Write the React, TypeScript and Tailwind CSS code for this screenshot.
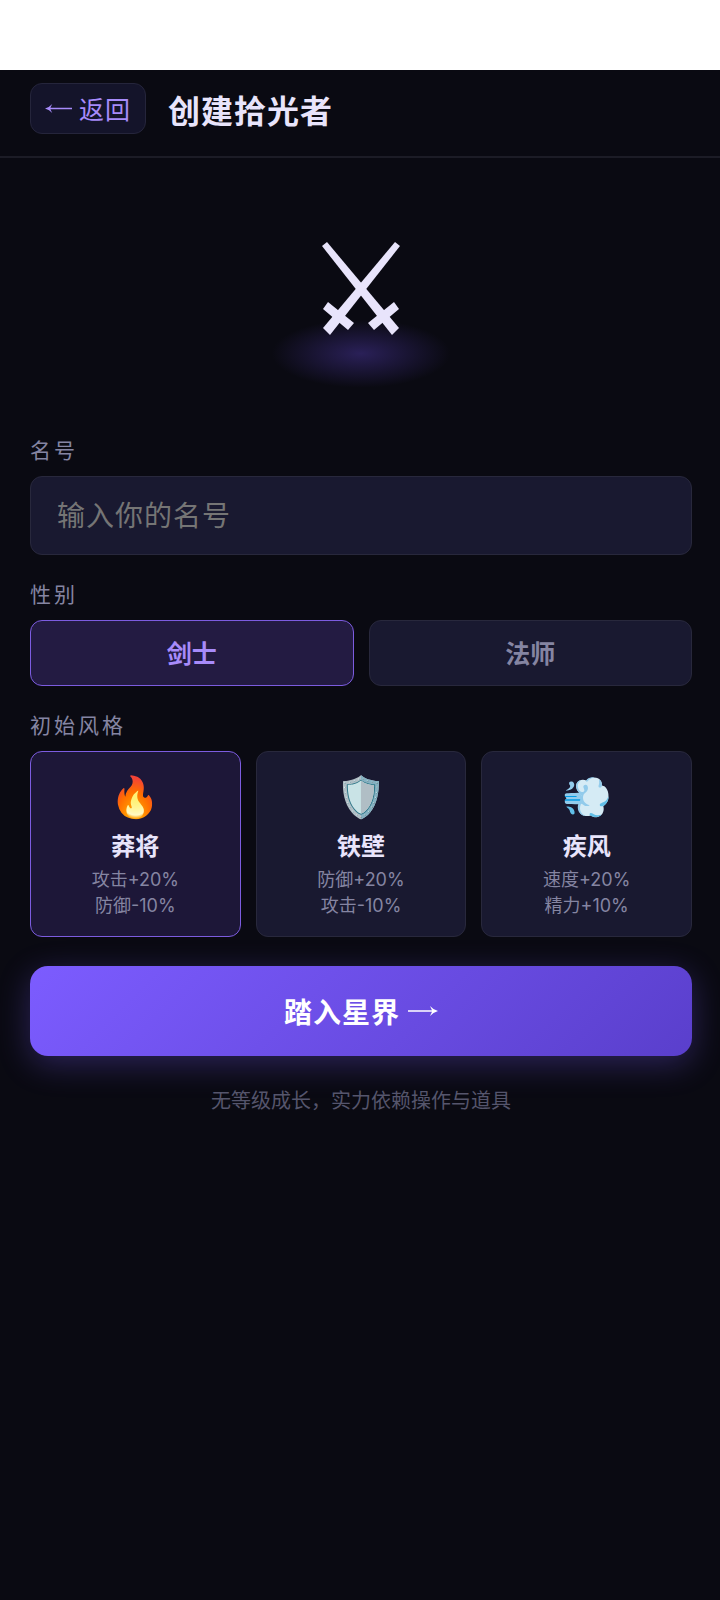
import { useState } from "react";

const genders: string[] = ["剑士", "法师"]

const styles: { icon: string, title: string, effects: string[] }[] = [
    {
        icon: "🔥",
        title: "莽将",
        effects: ["攻击+20%", "防御-10%"]
    },
    {
        icon: "🛡️",
        title: "铁壁",
        effects: ["防御+20%", "攻击-10%"]
    },
    {
        icon: "💨",
        title: "疾风",
        effects: ["速度+20%", "精力+10%"]
    }
]

function Swords() {
    return (
        <svg viewBox="0 0 78 94" className="relative w-[78px] h-[94px]" fill="#e8e4fb" aria-hidden="true">
            <path d="M0 4 L5 0 L77 86 L70 93 Z" />
            <path d="M78 4 L73 0 L1 86 L8 93 Z" />
            <path d="M1 67 L6 60 L32 81 L26 88 Z" />
            <path d="M77 67 L72 60 L46 81 L52 88 Z" />
        </svg>
    )
}

function Arrow({ className }: { className: string }) {
    return (
        <svg viewBox="0 0 30 10" className={className} fill="currentColor" aria-hidden="true">
            <path d="M0 4.2 H24 L22 0 Q25 3.6 30 5 Q25 6.4 22 10 L24 5.8 H0 Z" />
        </svg>
    )
}

export default function App() {
    const [name, setName] = useState("")
    const [gender, setGender] = useState(0)
    const [style, setStyle] = useState(0)

    return (
        <div className="min-h-screen flex flex-col bg-white text-[#e8e4fb] font-['Noto_Sans_CJK_SC',sans-serif]">
            <div className="h-[70px]"></div>
            <div className="flex-1 bg-[#0a0a12]">
                <header className="flex items-center gap-[22px] pl-[30px] pr-7 pt-[13px] pb-[22px] border-b-2 border-[#1c1c26]">
                    <button className="flex items-center gap-[7px] h-[51px] px-[14px] rounded-xl border border-[#25253b] bg-[#14142a] text-[#a78bfa] text-[25px] tracking-[1px]">
                        <Arrow className="w-[27px] h-[9px] rotate-180" />
                        返回
                    </button>
                    <h1 className="text-[32px] leading-[48px] font-bold tracking-[1px]">创建拾光者</h1>
                </header>

                <main className="flex flex-col pl-[30px] pr-7">
                    <div className="flex flex-col items-center pt-[84px] pb-[46px]">
                        <Swords />
                        <div className="-mt-[17px] w-[180px] h-[69px] bg-[radial-gradient(ellipse,#2a2058_0%,transparent_70%)]"></div>
                    </div>

                    <label htmlFor="name" className="mb-3 text-[21px] leading-[30px] tracking-[3px] text-[#8585a2]">名号</label>
                    <input
                        id="name"
                        value={name}
                        onChange={(e) => setName(e.target.value)}
                        placeholder="输入你的名号"
                        className="h-[79px] w-full px-[26px] pb-[3px] rounded-xl border border-[#28283c] bg-[#191930] text-[28px] tracking-[1px] placeholder:text-[#757575] outline-none" />

                    <h2 className="mt-[23px] mb-3 text-[21px] leading-[30px] tracking-[3px] text-[#8585a2]">性别</h2>
                    <div className="grid grid-cols-2 gap-[15px]">
                        {genders.map((item, index) => (
                            <button
                                key={item}
                                onClick={() => setGender(index)}
                                className={`h-[66px] rounded-xl border text-[25px] font-bold ${gender === index ? "border-[#7c5cdf] bg-[#231b42] text-[#a78bfa]" : "border-[#28283c] bg-[#191930] text-[#8585a2]"}`}>{item}</button>
                        ))}
                    </div>

                    <h2 className="mt-[23px] mb-3 text-[21px] leading-[30px] tracking-[3px] text-[#8585a2]">初始风格</h2>
                    <div className="grid grid-cols-3 gap-[15px]">
                        {styles.map((item, index) => (
                            <button
                                key={item.title}
                                onClick={() => setStyle(index)}
                                className={`flex flex-col items-center pt-5 pb-[17px] rounded-xl border ${style === index ? "border-[#7c5cdf] bg-[#1d1738]" : "border-[#28283c] bg-[#191930]"}`}>
                                <span className="text-[40px] leading-[50px] font-[Inter,sans-serif]">{item.icon}</span>
                                <span className="mt-2 mb-[7px] text-[24px] leading-[30px] font-bold">{item.title}</span>
                                {item.effects.map((effect) => (
                                    <span key={effect} className="text-lg leading-[26px] text-[#8585a2] font-[Inter,'Noto_Sans_CJK_SC',sans-serif]">{effect}</span>
                                ))}
                            </button>
                        ))}
                    </div>

                    <button className="flex items-center justify-center gap-2 mt-[29px] h-[90px] rounded-[18px] bg-[linear-gradient(135deg,#7c5cff,#5a3fcc)] shadow-[0_8px_32px_rgba(124,92,255,0.3)] text-white text-[28px] font-bold tracking-[1px]">
                        踏入星界
                        <Arrow className="w-[30px] h-[10px]" />
                    </button>
                    <p className="mt-[29px] text-center text-xl leading-[30px] text-[#55556c]">无等级成长，实力依赖操作与道具</p>
                </main>
            </div>
        </div>
    )
}
